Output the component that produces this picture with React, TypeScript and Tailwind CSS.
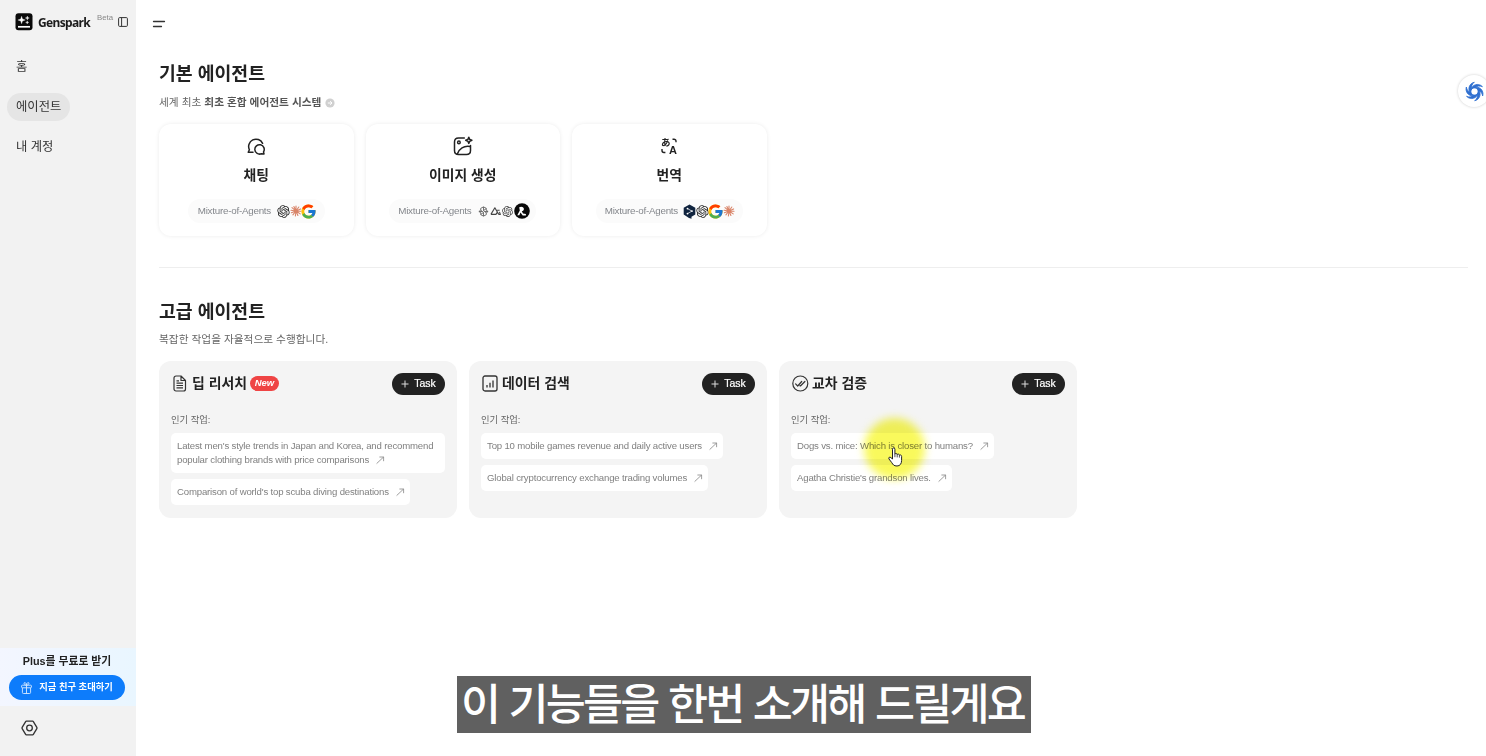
import type { ReactNode } from "react";
import clsx from "clsx";
import { FcGoogle } from "react-icons/fc";
import { RiOpenaiFill } from "react-icons/ri";

const NEW_TASK = "Task";
const POPULAR_TASKS = "인기 작업:";
const MIXTURE_OF_AGENTS = "Mixture-of-Agents";

interface BasicAgent {
  name: string;
  icon: ReactNode;
  models: ReactNode;
  pillClass: string;
}

interface AdvancedAgent {
  name: string;
  icon: ReactNode;
  isNew?: boolean;
  tasks: string[];
}

const LogoIcon: React.FC = () => (
  <svg width="18" height="18" viewBox="0 0 18 18">
    <rect x=".5" y=".3" width="17" height="17" rx="3" fill="#0a0a0a" />
    <path
      d="M6.6 3.2 7.5 6 10.3 7 7.5 8 6.6 10.8 5.7 8 2.9 7 5.7 6ZM12.3 3l.5 1.5 1.5.5-1.5.5-.5 1.5-.5-1.5-1.5-.5 1.5-.5ZM12.2 7.8l.4 1.2 1.2.4-1.2.4-.4 1.2-.4-1.2-1.2-.4 1.2-.4Z"
      fill="#fff"
      stroke="#fff"
      strokeWidth=".3"
    />
    <path d="M3 13.8h12" stroke="#fff" strokeWidth="1.7" />
  </svg>
);

const PanelIcon: React.FC = () => (
  <svg width="10" height="10" viewBox="0 0 10 10" fill="none" stroke="#333">
    <rect x="0.6" y="0.6" width="8.8" height="8.8" rx="1" />
    <path d="M3.6 .6v8.8" />
  </svg>
);

const MenuIcon: React.FC = () => (
  <svg
    width="14"
    height="8"
    viewBox="0 0 14 8"
    stroke="#333"
    strokeWidth="1.3"
    strokeLinecap="round"
  >
    <path d="M1.5 1.5h11M1.5 6.5h8" />
  </svg>
);

const ChatIcon: React.FC = () => (
  <svg
    width="20"
    height="20"
    viewBox="0 0 20 20"
    fill="none"
    stroke="#222"
    strokeWidth="1.5"
    strokeLinecap="round"
    strokeLinejoin="round"
  >
    <path d="M7 16.3H2.2l1.2-2.5A7.3 7.3 0 1 1 16.6 7.3" />
    <path d="M18 18l-.5-2.1a4.7 4.7 0 1 0-2.1 1.8Z" />
  </svg>
);

const ImageIcon: React.FC = () => (
  <svg
    width="20"
    height="20"
    viewBox="0 0 20 20"
    fill="none"
    stroke="#222"
    strokeWidth="1.5"
    strokeLinecap="round"
    strokeLinejoin="round"
  >
    <path d="M11.3 2H5.5Q1.5 2 1.5 6v8.5q0 4 4 4h8q4 0 4-4V9.5" />
    <circle cx="5.9" cy="6.4" r="1.3" />
    <path d="M4.3 18c1.5-5 6.8-9 13-7.5" />
    <path d="M15.8 1.2l.9 2.2 2.2.9-2.2.9-.9 2.2-.9-2.2-2.2-.9 2.2-.9Z" />
  </svg>
);

const TranslateIcon: React.FC = () => (
  <svg
    width="18"
    height="18"
    viewBox="0 0 18 18"
    aria-hidden="true"
    className="overflow-visible"
  >
    <text
      x="1"
      y="9.2"
      fontSize="9.5"
      fontWeight="700"
      fill="#222"
      className="font-['Noto_Sans_CJK_JP',sans-serif]"
    >
      あ
    </text>
    <text
      x="9"
      y="16.5"
      fontSize="11"
      fontWeight="700"
      fill="#222"
      className="font-['Liberation_Sans',sans-serif]"
    >
      A
    </text>
    <path
      d="M12.5 2.2h1.5a2 2 0 0 1 2 2v1M2 12v1.5a2 2 0 0 0 2 2h1.4"
      fill="none"
      stroke="#222"
      strokeWidth="1.4"
    />
  </svg>
);

const ClaudeIcon: React.FC = () => (
  <svg
    width="12"
    height="12"
    viewBox="0 0 12 12"
    stroke="#d98468"
    strokeWidth="1.1"
    strokeLinecap="round"
  >
    <path d="M6 6V1M6 6l2.8-4M6 6l4.6-2.1M6 6l5 .3M6 6l4.2 2.9M6 6l1.9 4.5M6 6l-.6 5M6 6 2.9 9.9M6 6l-4.6 1.8M6 6l-5-.7M6 6 2 2.7M6 6 3.9 1.5" />
  </svg>
);

const KnotIcon: React.FC = () => (
  <svg
    width="11"
    height="11"
    viewBox="0 0 12 12"
    fill="none"
    stroke="#666"
    strokeWidth="1"
  >
    <path d="M6 1 9 2.5v2.2L11 6 9 7.5v2L6 11 3 9.5v-2.2L1 6l2-1.5v-2ZM6 1v4l3-2.2M6 11V7L3 9.2M6 5l3 2.5M6 7 3 4.5M1 6h3.5M7.5 6H11" />
  </svg>
);

const TriangleIcon: React.FC = () => (
  <svg
    width="11"
    height="10"
    viewBox="0 0 12 10"
    fill="none"
    stroke="#444"
    strokeWidth="1.2"
    strokeLinejoin="round"
  >
    <path d="M1 8.7 5.3 1.5l4.2 7.2M1 8.7h5.5L8.2 6M7.8 4.2h2.7M10.3 6l1 2.7H9.5" />
  </svg>
);

const RecraftIcon: React.FC = () => (
  <svg width="16" height="16" viewBox="0 0 16 16">
    <circle cx="8" cy="8" r="7.8" fill="#080808" />
    <path
      d="M5.2 4.3c1.5-1.2 4.5-.8 4.7 1.4.1 1.4-.9 2.3-2.1 2.6l1.2 2.2 2.9.4v1.6H8.7L6.5 9.4l-1.2 2.8H3.3l2.5-4.6Z"
      fill="#fff"
    />
  </svg>
);

const DeepLIcon: React.FC = () => (
  <svg width="13" height="15" viewBox="0 0 13 15">
    <path
      d="M6.5.4 12.3 3.7v6.8L8.5 12.7v2L6 13.9.7 10.5V3.7Z"
      fill="#10243f"
    />
    <path
      d="M4.5 4.6 8.9 7.1 4.5 9.6"
      stroke="#fff"
      fill="none"
      strokeWidth=".7"
    />
    <circle cx="4.5" cy="4.6" r=".9" fill="#fff" />
    <circle cx="9" cy="7.1" r=".9" fill="#fff" />
    <circle cx="4.5" cy="9.6" r=".9" fill="#fff" />
  </svg>
);

const DocumentIcon: React.FC = () => (
  <svg
    width="17"
    height="17"
    viewBox="0 0 17 17"
    fill="none"
    stroke="#333"
    strokeWidth="1.2"
    strokeLinejoin="round"
  >
    <path d="M3 3a2 2 0 0 1 2-2h5l4.5 4.5V14a2 2 0 0 1-2 2H5a2 2 0 0 1-2-2ZM10 1v4.500h4.500M5.500 8.200H12M5.500 10.500H12M5.500 12.900H12M5.500 5.800H8" />
  </svg>
);

const ChartIcon: React.FC = () => (
  <svg
    width="17"
    height="17"
    viewBox="0 0 17 17"
    fill="none"
    stroke="#333"
    strokeWidth="1.3"
  >
    <rect x="2" y="1" width="14" height="15" rx="2" />
    <path d="M6 12.5v-2.5M9 12.5V7.7M12 12.5V5.5" />
  </svg>
);

const CheckIcon: React.FC = () => (
  <svg
    width="17"
    height="17"
    viewBox="0 0 17 17"
    fill="none"
    stroke="#333"
    strokeWidth="1.2"
    strokeLinecap="round"
    strokeLinejoin="round"
    className="overflow-visible"
  >
    <circle cx="9.3" cy="8.5" r="7.5" />
    <path d="M4.6 8.9l2.100 2.100 4-4.500M8.900 10.700l.5.300 4.500-4.500" />
  </svg>
);

const ArrowIcon: React.FC = () => (
  <svg
    width="9"
    height="9"
    viewBox="0 0 9 9"
    fill="none"
    stroke="#858585"
    strokeWidth=".8"
    className="inline-block shrink-0"
  >
    <path d="M.6 7.600 7.600 1M3.400 1h4.200v4.200" />
  </svg>
);

const GiftIcon: React.FC = () => (
  <svg
    width="11"
    height="12"
    viewBox="0 0 11 12"
    fill="none"
    stroke="#d7eaff"
    strokeWidth=".9"
  >
    <rect x=".6" y="3.2" width="9.8" height="2.6" rx=".7" />
    <path d="M1.4 5.8v4.7a1 1 0 0 0 1 1h6.2a1 1 0 0 0 1-1V5.8M5.5 3.2v8.3M5.5 3.2C3.2 3.2 2.2.6 3.8.6c1 0 1.7 1.2 1.7 2.6 0-1.4.7-2.6 1.7-2.6 1.6 0 .6 2.6-1.7 2.6Z" />
  </svg>
);

const SettingsIcon: React.FC = () => (
  <svg
    width="17"
    height="16"
    viewBox="0 0 18 17"
    fill="none"
    stroke="#333"
    strokeWidth="1.4"
    strokeLinejoin="round"
  >
    <path d="M5.7 1.2h6.6a1 1 0 0 1 .8.5l3.7 6.2a1.2 1.2 0 0 1 0 1.2l-3.7 6.2a1 1 0 0 1-.8.5H5.7a1 1 0 0 1-.8-.5L1.2 9.1a1.2 1.2 0 0 1 0-1.2l3.7-6.2a1 1 0 0 1 .8-.5Z" />
    <circle cx="9" cy="8.5" r="3" />
  </svg>
);

// six crescent blades turned around the centre
const SwirlIcon: React.FC = () => (
  <svg
    width="21"
    height="21"
    viewBox="0 0 20 20"
    fill="#2f6fd0"
    stroke="#2f6fd0"
    strokeWidth=".7"
    strokeLinejoin="round"
  >
    {[0, 60, 120, 180, 240, 300].map((angle) => (
      <path
        key={angle}
        d="M7 8C7.200 3.800 13.500 1.200 17.600 5.400 14.800 4.300 12.500 4.900 10.800 6.600 9.300 6.400 7.900 7 7 8Z"
        transform={`rotate(${angle} 10 10)`}
      />
    ))}
  </svg>
);

const HandCursor: React.FC = () => (
  <svg
    width="15"
    height="20"
    viewBox="0 0 15 20"
    fill="#fff"
    stroke="#222"
    strokeWidth="1"
    strokeLinejoin="round"
  >
    <path d="M4.5 12V2.2c0-1.8 2.4-1.8 2.4 0v5c.3-1.1 2.3-.9 2.3.4.5-.9 2.2-.6 2.2.7.6-.7 2.2-.4 2.2 1.1v4c0 3.3-1.6 5.6-4.6 5.6-3.2 0-4-1.4-5.2-3.3L1 12c-.9-1.5.8-2.5 1.9-1.4Z" />
    <path d="M6.9 7.2v3M9.2 7.6v2.8M11.4 8.3v2.3" strokeWidth=".8" />
  </svg>
);

const navItems = ["홈", "에이전트", "내 계정"];

const basicAgents: BasicAgent[] = [
  {
    name: "채팅",
    icon: <ChatIcon />,
    pillClass: "w-[137px] pl-[10px]",
    models: (
      <>
        <RiOpenaiFill size={15} className="text-[#222]" />
        <span className="-ml-[1px]">
          <ClaudeIcon />
        </span>
        <FcGoogle size={17} className="-ml-[2px]" />
      </>
    ),
  },
  {
    name: "이미지 생성",
    icon: <ImageIcon />,
    pillClass: "w-[147px] pl-[9px]",
    models: (
      <>
        <span className="w-[2px]" />
        <KnotIcon />
        <span className="w-[1px]" />
        <TriangleIcon />
        <RiOpenaiFill size={13} className="text-[#444]" />
        <RecraftIcon />
      </>
    ),
  },
  {
    name: "번역",
    icon: <TranslateIcon />,
    pillClass: "w-[147px] pl-[9px]",
    models: (
      <>
        <DeepLIcon />
        <RiOpenaiFill size={15} className="-ml-[1px] text-[#222]" />
        <FcGoogle size={17} className="-ml-[3px]" />
        <span className="-ml-[1px]">
          <ClaudeIcon />
        </span>
      </>
    ),
  },
];

const advancedAgents: AdvancedAgent[] = [
  {
    name: "딥 리서치",
    icon: <DocumentIcon />,
    isNew: true,
    tasks: [
      "Latest men's style trends in Japan and Korea, and recommend popular clothing brands with price comparisons",
      "Comparison of world's top scuba diving destinations",
    ],
  },
  {
    name: "데이터 검색",
    icon: <ChartIcon />,
    tasks: [
      "Top 10 mobile games revenue and daily active users",
      "Global cryptocurrency exchange trading volumes",
    ],
  },
  {
    name: "교차 검증",
    icon: <CheckIcon />,
    tasks: [
      "Dogs vs. mice: Which is closer to humans?",
      "Agatha Christie's grandson lives.",
    ],
  },
];

const Sidebar: React.FC = () => (
  <aside className="flex w-[136px] shrink-0 flex-col bg-[#f2f2f2]">
    <div className="flex h-[43px] items-center pl-[15px]">
      <LogoIcon />
      <span className="ml-[5px] w-[52px] pt-[2px] font-['Noto_Sans',sans-serif] text-[12px] font-bold tracking-[-0.65px] text-[#1c1c1c]">
        Genspark
      </span>
      <span className="mb-[7px] ml-[7px] w-[16px] text-[7.8px] text-[#888]">
        Beta
      </span>
      <span className="ml-[5px]">
        <PanelIcon />
      </span>
    </div>
    <nav className="mt-[10px] ml-[7px] flex flex-col items-start gap-3">
      {navItems.map((item) => (
        <span
          key={item}
          className={clsx(
            "flex h-7 items-center rounded-full px-[9px] text-[12.3px] text-[#333]",
            item === "에이전트" && "bg-[#e5e5e5]",
          )}
        >
          {item}
        </span>
      ))}
    </nav>
    <div className="mt-auto flex h-[58px] flex-col items-center bg-linear-to-r from-[#f3f6ff] to-[#e9f6ff] pr-[2px]">
      <span className="mt-[5px] h-4 text-[10.8px] leading-4 font-bold text-[#222]">
        Plus를 무료로 받기
      </span>
      <button className="mt-[6px] flex h-[25px] w-[116px] items-center justify-center gap-[7px] rounded-full bg-[#0d7cfb] text-[9.3px] font-bold text-white">
        <GiftIcon />
        지금 친구 초대하기
      </button>
    </div>
    <div className="mt-[14px] mb-[20px] ml-[21px]">
      <SettingsIcon />
    </div>
  </aside>
);

const BasicCard: React.FC<{ agent: BasicAgent }> = ({ agent }) => (
  <div className="flex h-[112px] w-[194.5px] flex-col items-center rounded-xl bg-white pt-3 shadow-[0_0_4px_rgba(0,0,0,0.08)]">
    <div className="flex h-5 items-center">{agent.icon}</div>
    <span className="mt-[10px] h-5 text-[13.8px] leading-5 font-bold text-[#222]">
      {agent.name}
    </span>
    <div
      className={clsx(
        "mt-[13px] flex h-6 items-center rounded-full bg-[#fbfbfb]",
        agent.pillClass,
      )}
    >
      <span className="w-[78px] shrink-0 text-[9.8px] tracking-[-0.24px] whitespace-nowrap text-[#84878c]">
        {MIXTURE_OF_AGENTS}
      </span>
      <span className="flex items-center">{agent.models}</span>
    </div>
  </div>
);

const AdvancedCard: React.FC<{ agent: AdvancedAgent }> = ({ agent }) => (
  <div className="flex h-[157px] w-[298px] flex-col rounded-xl bg-[#f4f4f4] px-3 pt-[11px]">
    <div className="flex h-[22px] items-center">
      {agent.icon}
      <span className="ml-[4px] text-[13.9px] leading-5 font-bold text-[#222]">
        {agent.name}
      </span>
      {agent.isNew && (
        <span className="ml-[3px] flex h-[15px] w-[29px] items-center justify-center rounded-full bg-[#ef4444] text-[9.5px] font-bold text-white italic">
          New
        </span>
      )}
      <button className="mt-[1px] ml-auto flex h-[22px] w-[53px] items-center justify-center gap-[5px] rounded-full bg-[#222] text-[10.5px] font-medium text-white">
        <svg width="8" height="8" viewBox="0 0 8 8" stroke="#ddd">
          <path d="M4 .5v7M.5 4h7" />
        </svg>
        <span className="[-webkit-text-stroke:0.2px_white]">{NEW_TASK}</span>
      </button>
    </div>
    <span className="mt-[19px] h-[14px] text-[9.3px] leading-[14px] text-[#666]">
      {POPULAR_TASKS}
    </span>
    <div className="mt-[6px] flex flex-col items-start gap-[6px]">
      {agent.tasks.map((task) => (
        <div
          key={task}
          className="rounded-[5px] bg-white py-[6px] pr-[5px] pl-[6px] text-[9.6px] leading-[14px] tracking-[-0.17px] text-[#808080]"
        >
          {task}
          <span className="ml-[7px]">
            <ArrowIcon />
          </span>
        </div>
      ))}
    </div>
  </div>
);

const App: React.FC = () => (
  <div className="relative flex h-[756px] w-[1486px] overflow-hidden bg-white font-['Liberation_Sans','Noto_Sans_CJK_KR',sans-serif]">
    <Sidebar />
    <main className="flex flex-1 flex-col">
      <header className="flex h-[47px] items-center pl-[16px]">
        <MenuIcon />
      </header>
      <section className="pr-[18px] pl-[23px]">
        <h1 className="mt-[13px] h-7 text-[18.3px] leading-7 font-bold text-[#222]">
          기본 에이전트
        </h1>
        <p className="mt-[6px] flex h-4 items-center gap-[3px] text-[10.7px] text-[#666]">
          <span>세계 최초</span>
          <span className="font-bold text-[#555]">
            최초 혼합 에어전트 시스템
          </span>
          <svg
            width="10"
            height="10"
            viewBox="0 0 10 10"
            className="mt-[1px] ml-[1px]"
          >
            <circle cx="5" cy="5" r="4.6" fill="#d0d0d0" />
            <path
              d="M2.8 5h4M5.2 3.2 7 5 5.2 6.8"
              stroke="#fff"
              fill="none"
            />
          </svg>
        </p>
        <div className="mt-[14px] flex gap-3">
          {basicAgents.map((agent) => (
            <BasicCard key={agent.name} agent={agent} />
          ))}
        </div>
        <hr className="mt-[31px] border-t border-[#eee]" />
        <h2 className="mt-[30px] h-7 text-[18.3px] leading-7 font-bold text-[#222]">
          고급 에이전트
        </h2>
        <p className="mt-[5px] h-4 text-[10.7px] leading-4 text-[#666]">
          복잡한 작업을 자율적으로 수행합니다.
        </p>
        <div className="mt-[14px] flex gap-3">
          {advancedAgents.map((agent) => (
            <AdvancedCard key={agent.name} agent={agent} />
          ))}
        </div>
      </section>
    </main>

    {/* floating assistant button */}
    <div className="absolute top-[75px] left-[1458px] flex size-8 items-center justify-center rounded-full bg-white shadow-[0_0_3px_rgba(0,0,0,0.2)]">
      <SwirlIcon />
    </div>

    {/* pointer highlight */}
    <div className="absolute top-[418px] left-[864px] size-[61px] rounded-full bg-[#f9f95c] mix-blend-multiply blur-[4px]" />
    <div className="absolute top-[447px] left-[888px]">
      <HandCursor />
    </div>

    {/* subtitle */}
    <div className="absolute top-[676px] left-[457px] flex h-[57px] w-[574px] items-center justify-center bg-[#606060] pt-[2px] pr-[3px]">
      <span className="text-[43.5px] leading-none font-medium tracking-[-2.75px] [word-spacing:1px] whitespace-nowrap text-white">
        이 기능들을 한번 소개해 드릴게요
      </span>
    </div>
  </div>
);

export default App;
